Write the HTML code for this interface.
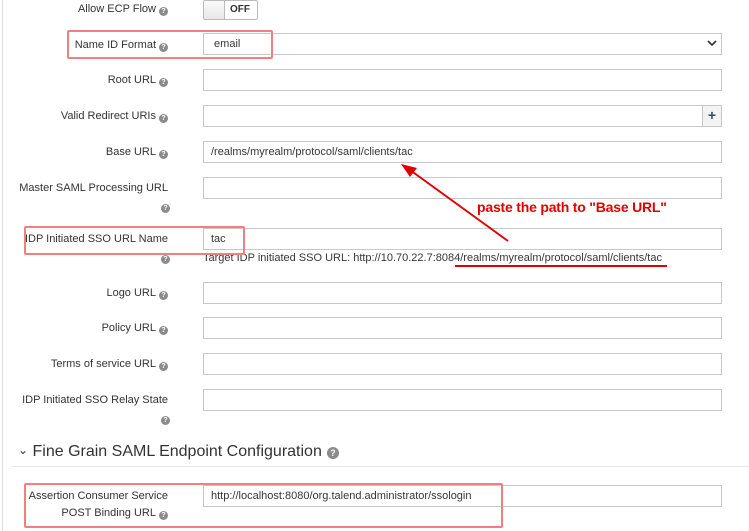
<!DOCTYPE html>
<html><head><style>
*{margin:0;padding:0;box-sizing:border-box}
body{width:749px;height:531px;background:#fff;position:relative;overflow:hidden;font-family:"Liberation Sans",sans-serif;font-size:11px;color:#333}
.lbl{position:absolute;right:581px;white-space:nowrap;text-align:right;line-height:14px}
.q{display:inline-block;width:9px;height:9px;border-radius:50%;background:#8b8b8b;color:#fff;font-size:7px;line-height:9px;text-align:center;font-weight:bold;vertical-align:-1px;margin-left:3px}
.inp{position:absolute;left:203px;width:519px;height:22px;border:1px solid #c8c8c8;background:#fff;font-size:11px;line-height:20px;padding-left:7px;color:#363636}
.rb{position:absolute;border:2px solid #f08080;border-radius:2px}
</style></head><body>
<div style="position:absolute;left:2px;top:0;width:1px;height:531px;background:#e0e0e0"></div>

<div class="lbl" style="top:2px">Allow ECP Flow<span class="q">?</span></div>
<div style="position:absolute;left:203px;top:0;width:55px;height:20px;border:1px solid #bbb;border-radius:2px;background:#fff">
<div style="position:absolute;left:0;top:0;width:21px;height:18px;background:linear-gradient(#fafafa,#e8e8e8);border-right:1px solid #bbb"></div>
<div style="position:absolute;left:26px;top:3px;font-size:10px;font-weight:bold;color:#333">OFF</div></div>

<div class="lbl" style="top:38px">Name ID Format<span class="q">?</span></div>
<div class="inp" style="top:33px">&nbsp;email</div>
<svg style="position:absolute;left:707px;top:40px" width="10" height="8"><path d="M1 1 L5 5 L9 1" stroke="#333" stroke-width="1.6" fill="none"/></svg>

<div class="lbl" style="top:73px">Root URL<span class="q">?</span></div>
<div class="inp" style="top:69px"></div>

<div class="lbl" style="top:109px">Valid Redirect URIs<span class="q">?</span></div>
<div class="inp" style="top:105px"></div>
<div style="position:absolute;left:702px;top:105px;width:20px;height:22px;border:1px solid #c8c8c8;background:#f3f3f3;text-align:center;font-weight:bold;font-size:14px;line-height:19px;color:#2b4b6b">+</div>

<div class="lbl" style="top:145px">Base URL<span class="q">?</span></div>
<div class="inp" style="top:141px">/realms/myrealm/protocol/saml/clients/tac</div>

<div class="lbl" style="top:181px">Master SAML Processing URL</div>
<div style="position:absolute;left:158px;top:200px"><span class="q">?</span></div>
<div class="inp" style="top:177px"></div>

<div class="lbl" style="top:232px">IDP Initiated SSO URL Name</div>
<div style="position:absolute;left:158px;top:251px"><span class="q">?</span></div>
<div class="inp" style="top:228px">tac</div>
<div style="position:absolute;left:203px;top:252px;font-size:11px;line-height:13px;color:#363636;white-space:nowrap">Target IDP initiated SSO URL: http://10.70.22.7:8084/realms/myrealm/protocol/saml/clients/tac</div>
<div style="position:absolute;left:455px;top:265px;width:212px;height:2px;background:#e00000"></div>

<div class="lbl" style="top:286px">Logo URL<span class="q">?</span></div>
<div class="inp" style="top:282px"></div>
<div class="lbl" style="top:321px">Policy URL<span class="q">?</span></div>
<div class="inp" style="top:317px"></div>
<div class="lbl" style="top:357px">Terms of service URL<span class="q">?</span></div>
<div class="inp" style="top:353px"></div>
<div class="lbl" style="top:393px">IDP Initiated SSO Relay State</div>
<div style="position:absolute;left:158px;top:412px"><span class="q">?</span></div>
<div class="inp" style="top:389px"></div>

<div style="position:absolute;left:18px;top:443px;font-size:16px;color:#333;white-space:nowrap"><span style="font-size:12px;vertical-align:2px">&#8964;</span> Fine Grain SAML Endpoint Configuration<span class="q" style="width:12px;height:12px;line-height:12px;font-size:9px;margin-left:5px;vertical-align:0px">?</span></div>
<div style="position:absolute;left:12px;top:466px;width:737px;height:1px;background:#e5e5e5"></div>

<div class="lbl" style="top:489px">Assertion Consumer Service</div>
<div class="lbl" style="top:506px">POST Binding URL<span class="q">?</span></div>
<div class="inp" style="top:485px">http://localhost:8080/org.talend.administrator/ssologin</div>

<div class="rb" style="left:67px;top:30px;width:206px;height:29px"></div>
<div class="rb" style="left:24px;top:226px;width:221px;height:29px"></div>
<div class="rb" style="left:24px;top:483px;width:479px;height:45px"></div>

<div style="position:absolute;left:477px;top:199px;font-size:14px;font-weight:bold;color:#e00000;white-space:nowrap;letter-spacing:-0.2px">paste the path to "Base URL"</div>
<svg style="position:absolute;left:0;top:0" width="749" height="531">
<line x1="508" y1="241" x2="410" y2="170" stroke="#e00000" stroke-width="2"/>
<path d="M401 164 L417 168 L410 177 Z" fill="#e00000"/>
</svg>
</body></html>
